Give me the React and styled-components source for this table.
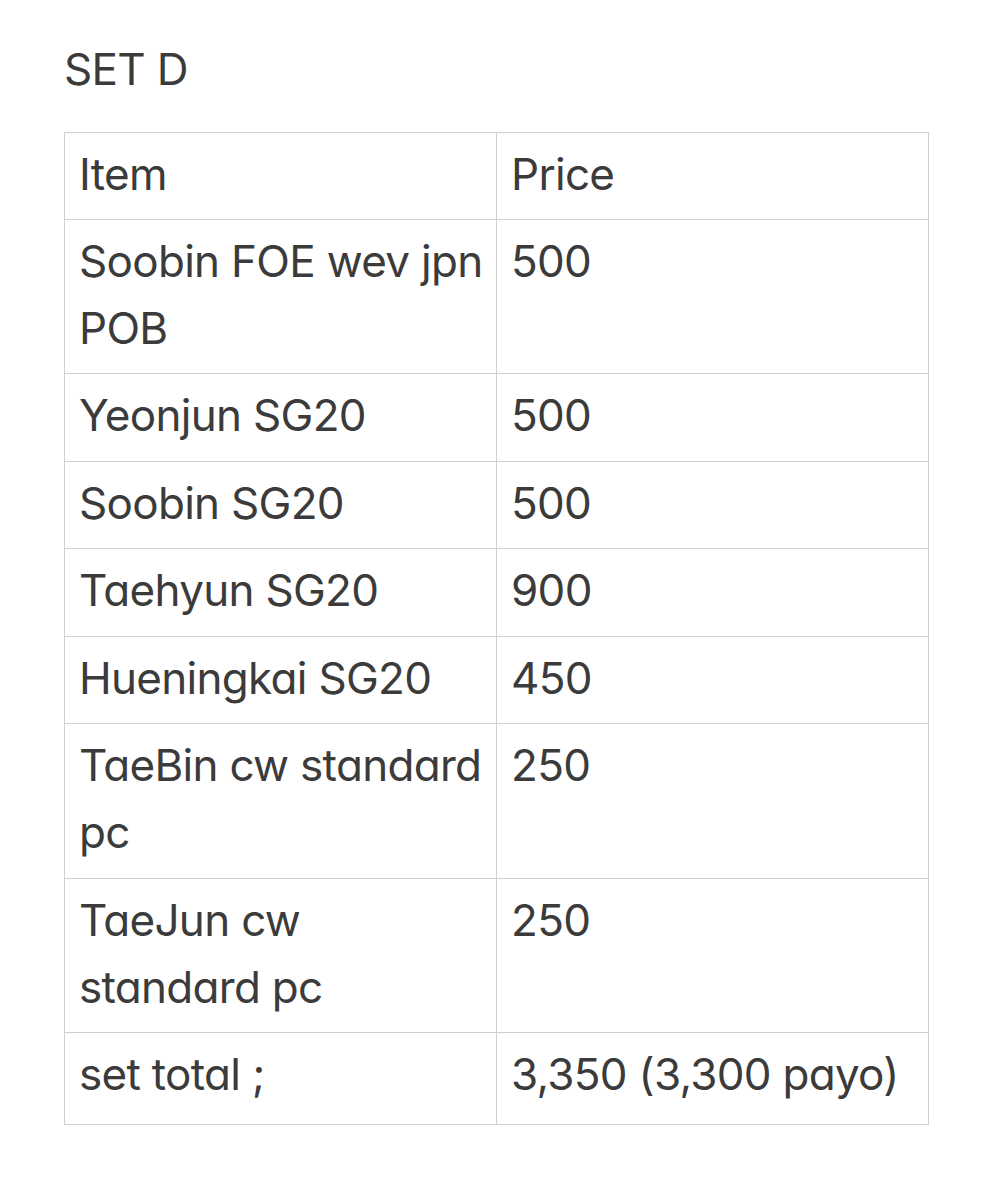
import React from "react";
import styled, { createGlobalStyle } from "styled-components";

const Global = createGlobalStyle`
  html, body { margin: 0; padding: 0; background: #ffffff; }
  body {
    font-family: Inter, "Liberation Sans", sans-serif;
    font-feature-settings: "cv11" 1;
    color: #3b3b3b;
    -webkit-font-smoothing: antialiased;
  }
`;

const Page = styled.main`
  padding: 41px 67px 60px 64px;
  display: flex;
  flex-direction: column;
  gap: 35px;
`;

const Title = styled.h1`
  margin: 0;
  font-size: 44px;
  font-weight: 400;
  line-height: 56px;
  letter-spacing: -0.7px;
  color: #3b3b3b;
`;

const Table = styled.table`
  width: 865px;
  border-collapse: collapse;
  table-layout: fixed;
  font-size: 44px;
  line-height: 67px;
  letter-spacing: -0.7px;
`;

const Cell = styled.td`
  border: 1px solid #cfcfcf;
  padding: 8px 14px ${(p) => p.$bottom || "11.5px"} 14px;
  vertical-align: top;
  text-align: left;
  font-weight: 400;
  color: #3b3b3b;
  width: 50%;
`;

const Line = styled.span`
  display: block;
  white-space: nowrap;
`;

const rows = [
  [["Soobin FOE wev jpn", "POB"], "500"],
  [["Yeonjun SG20"], "500"],
  [["Soobin SG20"], "500"],
  [["Taehyun SG20"], "900"],
  [["Hueningkai SG20"], "450"],
  [["TaeBin cw standard", "pc"], "250"],
  [["TaeJun cw", "standard pc"], "250"],
  [["set total ;"], "3,350 (3,300 payo)"],
];

export default function App() {
  return (
    <>
      <Global />
      <Page>
        <Title>SET D</Title>
        <Table>
          <thead>
            <tr>
              <Cell as="th" $bottom="10.5px">Item</Cell>
              <Cell as="th" $bottom="10.5px">Price</Cell>
            </tr>
          </thead>
          <tbody>
            {rows.map(([lines, price], i) => {
              const bottom = i === rows.length - 1 ? "16px" : undefined;
              return (
                <tr key={i}>
                  <Cell $bottom={bottom}>
                    {lines.map((l, j) => (
                      <Line key={j}>{l}</Line>
                    ))}
                  </Cell>
                  <Cell $bottom={bottom}>{price}</Cell>
                </tr>
              );
            })}
          </tbody>
        </Table>
      </Page>
    </>
  );
}
